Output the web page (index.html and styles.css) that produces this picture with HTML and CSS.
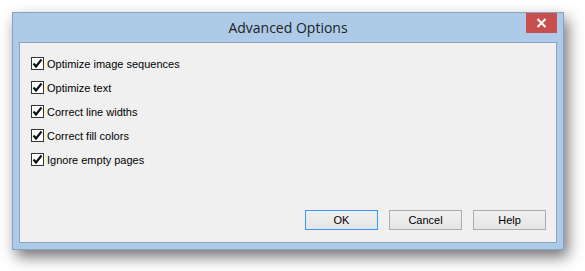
FILE: index.html
```html
<!DOCTYPE html>
<html lang="en">
<head>
    <meta charset="UTF-8">
    <title>Advanced Options</title>
    <link rel="stylesheet" href="styles.css">
</head>
<body>

    <div class="window">
        <div class="titlebar">
            <span class="title">Advanced Options</span>
            <button class="close-btn" type="button">
                <svg width="11" height="10" viewBox="0 0 11 10">
                    <path d="M1.5 1 L9.5 9 M9.5 1 L1.5 9" stroke="#fff" stroke-width="2" fill="none"/>
                </svg>
            </button>
        </div>

        <div class="content">
            <div class="options">
                <label class="option"><span class="box"><svg width="11" height="11" viewBox="0 0 11 11"><path d="M1.5 5.5 L4 8.5 L9.5 1.5" stroke="#111" stroke-width="2.2" fill="none"/></svg></span>Optimize image sequences</label>
                <label class="option"><span class="box"><svg width="11" height="11" viewBox="0 0 11 11"><path d="M1.5 5.5 L4 8.5 L9.5 1.5" stroke="#111" stroke-width="2.2" fill="none"/></svg></span>Optimize text</label>
                <label class="option"><span class="box"><svg width="11" height="11" viewBox="0 0 11 11"><path d="M1.5 5.5 L4 8.5 L9.5 1.5" stroke="#111" stroke-width="2.2" fill="none"/></svg></span>Correct line widths</label>
                <label class="option"><span class="box"><svg width="11" height="11" viewBox="0 0 11 11"><path d="M1.5 5.5 L4 8.5 L9.5 1.5" stroke="#111" stroke-width="2.2" fill="none"/></svg></span>Correct fill colors</label>
                <label class="option"><span class="box"><svg width="11" height="11" viewBox="0 0 11 11"><path d="M1.5 5.5 L4 8.5 L9.5 1.5" stroke="#111" stroke-width="2.2" fill="none"/></svg></span>Ignore empty pages</label>
            </div>

            <div class="buttons">
                <button class="btn default" type="button">OK</button>
                <button class="btn" type="button">Cancel</button>
                <button class="btn" type="button">Help</button>
            </div>
        </div>
    </div>

</body>
</html>
```

FILE: styles.css
```css
html {
    height: 100%;
}

body {
    margin: 0;
    padding: 12px 0 0 12px;
    min-height: 100%;
    box-sizing: border-box;
    background-color: #ffffff;
    font-family: "Liberation Sans", Arial, sans-serif;
}

.window {
    width: 538px;
    height: 230px;
    border: 1px solid #8aa2bd;
    background-color: #adcbe9;
    box-shadow: 4px 7px 14px rgba(0, 0, 0, 0.55);
    display: flex;
    flex-direction: column;
    padding: 0 6px 6px 6px;
}

.titlebar {
    height: 29px;
    display: flex;
    align-items: center;
    justify-content: center;
    position: relative;
}

.title {
    font-size: 14px;
    color: #222;
    font-family: "Open Sans", "Liberation Sans", sans-serif;
}

.close-btn {
    position: absolute;
    top: 0;
    right: 0;
    width: 31px;
    height: 20px;
    border: none;
    padding: 0;
    background-color: #c7504f;
    display: flex;
    align-items: center;
    justify-content: center;
}

.content {
    flex: 1;
    background-color: #f0f0f0;
    border: 1px solid #8fa3bb;
    display: flex;
    flex-direction: column;
    padding: 14px 10px 12px 11px;
}

.options {
    display: flex;
    flex-direction: column;
    gap: 11px;
}

.option {
    display: flex;
    align-items: center;
    font-size: 11px;
    color: #000;
    height: 13px;
}

.box {
    width: 11px;
    height: 11px;
    border: 1px solid #333;
    background-color: #fff;
    margin-right: 3px;
    display: flex;
    align-items: center;
    justify-content: center;
}

.buttons {
    margin-top: auto;
    display: flex;
    justify-content: flex-end;
    gap: 11px;
}

.btn {
    width: 73px;
    height: 20px;
    border: 1px solid #acacac;
    background: linear-gradient(#f0f0f0, #e5e5e5);
    font-family: "Liberation Sans", Arial, sans-serif;
    font-size: 11px;
    color: #000;
    padding: 0;
}

.btn.default {
    border-color: #3399ff;
}
```
